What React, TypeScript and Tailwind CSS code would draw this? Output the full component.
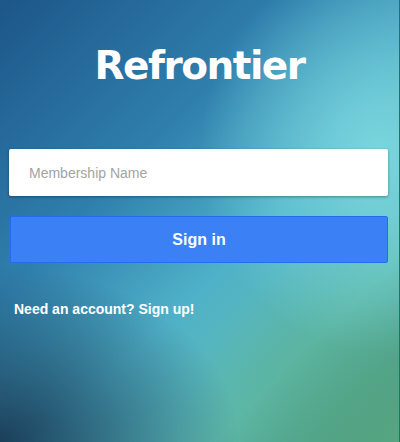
import React from 'react';

export default function App() {
    return (
        <div className="relative h-[442px] w-[400px] overflow-hidden border-r border-[#4f5d63] bg-[radial-gradient(ellipse_45%_45%_at_95%_35%,#7ad6de_0%,rgba(122,214,222,0)_100%),radial-gradient(ellipse_60%_40%_at_0%_100%,#1b3f5a_0%,rgba(27,63,90,0)_100%),radial-gradient(ellipse_55%_45%_at_100%_100%,#56a682_0%,rgba(86,166,130,0)_100%),linear-gradient(135deg,#1d5689_0%,#2f7fad_35%,#4fb1c8_58%,#5fbdb2_78%,#3f8c7a_100%)]">
            <div className="flex flex-col pt-[40px]">
                <h1 className="text-center font-['DejaVu_Sans',sans-serif] text-[39px] font-bold leading-[52px] tracking-[-1.5px] text-white">
                    Refrontier
                </h1>
                <div className="mt-[57px] px-[9px] pr-[11px]">
                    <input
                        type="text"
                        placeholder="Membership Name"
                        className="h-[47px] w-full rounded-[2px] bg-white pl-[20px] font-['Liberation_Sans',sans-serif] text-[14px] text-gray-700 shadow-[0_1px_3px_rgba(0,0,0,0.35)] outline-none placeholder:text-[#a3a3a3]"
                    />
                </div>
                <div className="mt-[20px] px-[10px] pr-[11px]">
                    <button className="h-[47px] w-full rounded-[2px] border border-[#1f6ff0] bg-[#3b80f4] font-['Liberation_Sans',sans-serif] text-[16px] font-bold text-white">
                        Sign in
                    </button>
                </div>
                <p className="mt-[36px] pl-[14px] font-['Liberation_Sans',sans-serif] text-[14px] font-bold text-white">
                    Need an account? Sign up!
                </p>
            </div>
        </div>
    );
}
